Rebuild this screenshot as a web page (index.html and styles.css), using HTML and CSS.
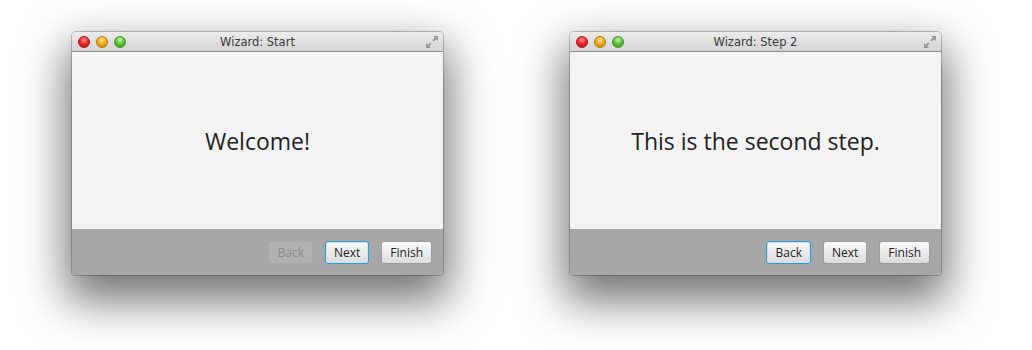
FILE: index.html
```html
<!DOCTYPE html>
<html>
<head>
<meta charset="utf-8">
<link rel="stylesheet" href="styles.css">
</head>
<body>
<div class="stage">
  <div class="window">
    <div class="titlebar">
      <div class="lights">
        <span class="light red"></span>
        <span class="light yellow"></span>
        <span class="light green"></span>
      </div>
      <div class="title">Wizard: Start</div>
      <svg class="resize" width="14" height="14" viewBox="0 0 14 14">
        <path d="M8 1h5v5l-1.8-1.8-2.4 2.4-1.4-1.4 2.4-2.4z" fill="#9a9a9a"/>
        <path d="M6 13H1V8l1.8 1.8 2.4-2.4 1.4 1.4-2.4 2.4z" fill="#9a9a9a"/>
      </svg>
    </div>
    <div class="content"><p class="message">Welcome!</p></div>
    <div class="footer">
      <button class="btn disabled">Back</button>
      <button class="btn focused">Next</button>
      <button class="btn">Finish</button>
    </div>
  </div>
  <div class="window">
    <div class="titlebar">
      <div class="lights">
        <span class="light red"></span>
        <span class="light yellow"></span>
        <span class="light green"></span>
      </div>
      <div class="title">Wizard: Step 2</div>
      <svg class="resize" width="14" height="14" viewBox="0 0 14 14">
        <path d="M8 1h5v5l-1.8-1.8-2.4 2.4-1.4-1.4 2.4-2.4z" fill="#9a9a9a"/>
        <path d="M6 13H1V8l1.8 1.8 2.4-2.4 1.4 1.4-2.4 2.4z" fill="#9a9a9a"/>
      </svg>
    </div>
    <div class="content"><p class="message">This is the second step.</p></div>
    <div class="footer">
      <button class="btn focused">Back</button>
      <button class="btn">Next</button>
      <button class="btn">Finish</button>
    </div>
  </div>
</div>
</body>
</html>
```

FILE: styles.css
```css
html, body {
  margin: 0;
  padding: 0;
  background: #ffffff;
  width: 1032px;
  height: 350px;
  overflow: hidden;
}
.stage {
  display: flex;
  gap: 127px;
  padding: 32px 0 0 72px;
}
.window {
  width: 371px;
  border-radius: 4px 4px 3px 3px;
  box-shadow: 0 0 0 1px rgba(0,0,0,0.22), 0 20px 45px 6px rgba(0,0,0,0.55);
  overflow: hidden;
  font-family: "DejaVu Sans", "Liberation Sans", sans-serif;
}
.titlebar {
  position: relative;
  height: 20px;
  display: flex;
  align-items: center;
  justify-content: center;
  background: linear-gradient(#ececec, #d4d4d4);
  border-bottom: 1px solid #8f8f8f;
  box-sizing: border-box;
}
.lights {
  position: absolute;
  left: 6px;
  top: 4px;
  display: flex;
  gap: 6px;
}
.light {
  width: 12px;
  height: 12px;
  border-radius: 50%;
  box-sizing: border-box;
}
.red {
  background: radial-gradient(circle at 50% 30%, #ff9a9a 0, #f0282a 45%, #b00f12 100%);
  border: 1px solid #a41a1c;
}
.yellow {
  background: radial-gradient(circle at 50% 30%, #ffe49a 0, #f2ae1c 45%, #c27a08 100%);
  border: 1px solid #b07d14;
}
.green {
  background: radial-gradient(circle at 50% 30%, #c8f5a8 0, #5fc43a 45%, #2f8e18 100%);
  border: 1px solid #4a8f2e;
}
.title {
  font-size: 11.5px;
  color: #3a3a3a;
  padding-top: 1px;
}
.resize {
  position: absolute;
  right: 4px;
  top: 3px;
}
.content {
  height: 177px;
  background: #f3f3f3;
  display: flex;
  align-items: center;
  justify-content: center;
}
.message {
  margin: 0;
  font-family: "Open Sans", "DejaVu Sans", sans-serif;
  font-size: 23px;
  color: #222;
}
.footer {
  height: 46px;
  background: #a7a7a7;
  display: flex;
  justify-content: flex-end;
  align-items: center;
  gap: 12px;
  padding: 0 11px 0 0;
  box-sizing: border-box;
}
.btn {
  height: 23px;
  padding: 0 8px;
  font-family: "Open Sans", "DejaVu Sans", sans-serif;
  font-size: 12px;
  color: #222;
  border: 1px solid #9c9c9c;
  border-radius: 3px;
  background: linear-gradient(#fafafa, #dcdcdc);
  margin-top: 1px;
}
.btn.focused {
  border-color: #2c9ad6;
  box-shadow: inset 0 0 0 1px #c6e6f7;
}
.btn.disabled {
  background: #b1b1b1;
  border-color: #a9a9a9;
  color: #8b8b8b;
}
```
